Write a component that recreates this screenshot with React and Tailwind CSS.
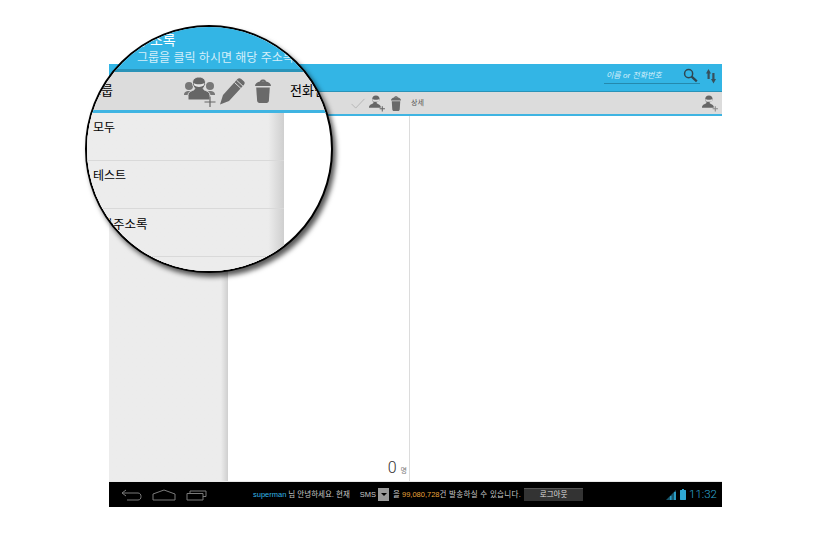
import React from 'react'

const KR = "font-['Liberation_Sans','Noto_Sans_CJK_KR',sans-serif]"

function PersonAdd({ className, plus = '#666' }) {
    return (
        <svg viewBox="0 0 16 16" className={className}>
            <path d="M6.500 .5C4.300 .5 3 2 3 4c0 1.200.5 2.300 1.300 3-.1.600-.5 1-1.100 1.200C1.800 8.800.4 9.400 0 11v1h11v-1.300c-.5-1.300-1.800-1.900-3-2.500-.6-.2-.9-.6-1-1.200C8.900 6.300 10 5.200 10 4c0-2-1.300-3.500-3.500-3.500z" fill="#666" />
            <path d="M3 3.800c1.200 1 5.800 1 7 0l-.5 1.800c-1.300 1.100-4.700 1.100-6 0z" fill="#ddd" />
            <path d="M12.500 10.500v5M10 13h5" stroke={plus} strokeWidth="1" />
        </svg>
    )
}

function GroupAdd({ className }) {
    return (
        <svg viewBox="0 0 32 32" className={className}>
            <circle cx="5" cy="11" r="4" fill="#777" />
            <path d="M0 20c0-3 2-4 5-4s6 1 6 4z" fill="#777" />
            <circle cx="26" cy="11" r="4" fill="#777" />
            <path d="M20 20c0-3 3-4 6-4s5 1 5 4z" fill="#777" />
            <path d="M15 2c-4 0-6.500 2.500-6.500 6 0 2.200 1 4 2.300 5.200-.2 1.300-1 1.800-2.300 2.300-2.400.8-4.500 2-4.500 5V25h22v-4.500c0-3-2.100-4.200-4.500-5-1.300-.5-2.100-1-2.300-2.300 1.300-1.200 2.300-3 2.300-5.200 0-3.500-2.500-6-6.500-6z" fill="#666" stroke="#dcdcdc" strokeWidth="1" />
            <path d="M9.500 8c2 1.700 8.500 1.700 11 0l-.8 2.600c-2.300 1.800-7.100 1.800-9.400 0z" fill="#e4e4e4" />
            <path d="M26 21.500v11M20.500 27h11" stroke="#666" strokeWidth="1.200" />
        </svg>
    )
}

function Pencil({ className }) {
    return (
        <svg viewBox="0 0 26 28" className={className}>
            <path d="M1 27.500l3-9.500L18.500 2c1-1 2.300-1.200 3.500-.2l2.800 2.500c1.200 1 1.200 2.300.2 3.500L10 24z" fill="#6a6a6a" />
            <path d="M15.500 5.500l6.500 6M17.500 3.200l6.500 6" stroke="#dcdcdc" strokeWidth="1" />
        </svg>
    )
}

function Trash({ className }) {
    return (
        <svg viewBox="0 0 16 24" className={className}>
            <path d="M0 7c0-2.500 2.500-4 5-4.500C5.300 1 6.500 .5 8 .5s2.700.5 3 2c2.500.5 5 2 5 4.500z" fill="#6a6a6a" />
            <path d="M6.500 2.500c.8-.5 2.200-.5 3 0z" fill="#c8c8c8" />
            <path d="M1.200 8.500h13.600l-.9 13c-.1 1.300-1 2.500-2.400 2.500H4.500c-1.400 0-2.300-1.200-2.400-2.500z" fill="#6a6a6a" />
        </svg>
    )
}

function Header() {
    return (
        <div className="flex h-[28px] shrink-0 items-start justify-end border-b border-[#2a93b8] bg-[#33b5e5] pr-[5px]">
            <div className="mt-[4px] flex h-[16px] w-[96px] items-center justify-between border-b border-[#2489ad] pl-[2px] pr-[2px]">
                <span className={`${KR} text-[8px] italic text-[#d8f1fb]`}>이름 or 전화번호</span>
                <svg viewBox="0 0 16 16" className="h-[15px] w-[15px]">
                    <circle cx="6" cy="6" r="4.300" fill="none" stroke="#2f4650" strokeWidth="1.600" />
                    <path d="M9.200 9.200l5.500 5" stroke="#2f4650" strokeWidth="2.400" />
                </svg>
            </div>
            <svg viewBox="0 0 12 16" className="ml-[5px] mt-[3px] h-[18px] w-[12px]">
                <path d="M3.500 1L1 5.500h1.500V11h2.200V5.500H6zM8.500 15.500L11 11H9.500V5H7.300v6H6z" fill="#37505c" />
            </svg>
        </div>
    )
}

function Toolbar() {
    return (
        <div className="flex h-[24px] shrink-0 items-center border-b-[2px] border-[#3fb4e2] bg-[#dcdcdc]">
            <div className="flex w-[240px] items-center pl-[241px]">
                <svg viewBox="0 0 16 12" className="h-[11px] w-[16px] shrink-0">
                    <path d="M1 6.500L5.500 11 15 1" fill="none" stroke="#b4b4b4" strokeWidth="1" />
                </svg>
                <PersonAdd className="ml-[3px] h-[17px] w-[17px] shrink-0" />
                <Trash className="ml-[4px] h-[15px] w-[12px] shrink-0" />
                <span className={`${KR} ml-[9px] shrink-0 text-[7px] text-[#555]`}>상세</span>
            </div>
            <PersonAdd className="ml-auto mr-[3px] h-[17px] w-[17px]" plus="#888" />
        </div>
    )
}

function Columns() {
    return (
        <div className="flex min-h-0 flex-1">
            <div className="w-[119px] bg-[#ececec] bg-gradient-to-l from-[#cfcfcf] via-[#ececec] via-[6%] to-[#ececec]" />
            <div className="flex w-[182px] flex-col justify-end border-r border-[#dcdcdc] bg-white pb-[5px] pr-[2px]">
                <div className="flex items-baseline justify-end">
                    <span className="font-['Roboto',sans-serif] text-[16px] font-light leading-none text-[#333]">0</span>
                    <span className={`${KR} ml-[4px] text-[7px] leading-none text-[#777]`}>명</span>
                </div>
            </div>
            <div className="flex-1 bg-white" />
        </div>
    )
}

function BottomBar() {
    return (
        <div className="flex h-[26px] shrink-0 items-center border-t border-[#e8e8e8] bg-black pl-[12px]">
            <svg viewBox="0 0 22 12" className="h-[12px] w-[22px]">
                <path d="M5 1L1 4l4 3M1 4h16c2 0 3 1.500 3 3.500S19 11 17 11H6" fill="none" stroke="#7a7a7a" strokeWidth="1" />
            </svg>
            <svg viewBox="0 0 24 12" className="ml-[9px] h-[12px] w-[24px]">
                <path d="M1 5l11-4 11 4v6H1z" fill="none" stroke="#7a7a7a" strokeWidth="1" />
            </svg>
            <svg viewBox="0 0 22 12" className="ml-[10px] h-[12px] w-[22px]">
                <path d="M1 4.500h16V11H1zM4 4.500V2h16v5.500h-3" fill="none" stroke="#7a7a7a" strokeWidth="1" />
            </svg>
            <div className={`${KR} ml-[45px] flex items-center text-[7.500px] whitespace-nowrap text-[#c8c8c8]`}>
                <span className="text-[#33b5e5]">superman</span>
                <span className="ml-[2px]">님 안녕하세요. 현재</span>
                <span className="ml-[10px]">SMS</span>
                <span className="ml-[2px] flex h-[13px] w-[11px] items-center justify-center bg-[#9a9a9a]">
                    <span className="border-x-[3px] border-t-[3px] border-x-transparent border-t-black" />
                </span>
                <span className="ml-[4px]">을</span>
                <span className="ml-[2px] text-[#e8a33a]">99,080,728</span>
                <span className="tracking-[0.3px]">건 발송하실 수 있습니다.</span>
                <span className="ml-[3px] flex h-[13px] w-[59px] items-center justify-center border-t border-[#555] bg-[#333] text-[#ddd]">로그아웃</span>
            </div>
            <div className="ml-auto flex items-center pr-[5px]">
                <svg viewBox="0 0 10 10" className="h-[10px] w-[10px]">
                    <path d="M0 10L10 0v10z" fill="#17566c" />
                    <path d="M4 6h1.500v4H4zM8 2h2v8H8z" fill="#2a9cc4" />
                </svg>
                <svg viewBox="0 0 6 11" className="ml-[4px] h-[11px] w-[6px]">
                    <path d="M2 0h2v1h1.500c.3 0 .5.2.5.5v9c0 .3-.2.5-.5.5h-5c-.3 0-.5-.2-.5-.5v-9c0-.3.2-.5.5-.5H2z" fill="#2fa8d4" />
                </svg>
                <span className="ml-[3px] font-['Roboto',sans-serif] text-[11.500px] font-light leading-none text-[#2fa8d4]">11:32</span>
            </div>
        </div>
    )
}

function GroupRow({ name, wide }) {
    return (
        <div className={`h-[48px] border-b border-[#d9d9d9] pl-[6px] ${KR} leading-[18px] text-black ${wide ? 'pt-[7px] text-[12.500px]' : 'pt-[6px] text-[12px]'}`}>
            <div className={wide ? '-ml-[3px]' : ''}>{name}</div>
        </div>
    )
}

// 돋보기로 확대된 왼쪽 영역
function Magnifier() {
    return (
        <div className="absolute left-[85px] top-[25px] h-[248px] w-[248px] overflow-hidden rounded-full border-2 border-black bg-white shadow-[3px_4px_5px_rgba(0,0,0,0.65)]">
            <div className="flex h-[45px] flex-col border-b-[3px] border-[#2a93b8] bg-[#33b5e5] pl-[50px] pt-[4px]">
                <div className={`${KR} whitespace-nowrap text-[14px] leading-[18px] text-white`}>주소록</div>
                <div className={`${KR} whitespace-nowrap text-[12px] leading-[18px] text-[#d4effa]`}>그룹을 클릭 하시면 해당 주소록을 볼 수 있습니다</div>
            </div>
            <div className="flex h-[41px] items-center border-b-[3px] border-[#3fb4e2] bg-[#dcdcdc]">
                <span className={`${KR} w-[97px] shrink-0 whitespace-nowrap pl-[2px] text-[13px] text-black`}>그룹</span>
                <GroupAdd className="h-[32px] w-[32px] shrink-0" />
                <Pencil className="ml-[3px] h-[28px] w-[26px] shrink-0" />
                <Trash className="ml-[10px] h-[24px] w-[16px] shrink-0" />
                <span className={`${KR} ml-[19px] shrink-0 whitespace-nowrap text-[13px] text-black`}>전화번호</span>
            </div>
            <div className="w-[197px] bg-[#ececec] bg-gradient-to-l from-[#cfcfcf] via-[#ececec] via-[8%] to-[#ececec]">
                <GroupRow name="모두" />
                <GroupRow name="테스트" />
                <GroupRow name="기타주소록" wide />
                <div className="h-[20px]" />
            </div>
        </div>
    )
}

export default function App() {
    return (
        <div className="relative h-[556px] w-[820px] overflow-hidden bg-white pl-[109px] pt-[64px]">
            <div className="flex h-[443px] w-[613px] flex-col">
                <Header />
                <Toolbar />
                <Columns />
                <BottomBar />
            </div>
            <Magnifier />
        </div>
    )
}
